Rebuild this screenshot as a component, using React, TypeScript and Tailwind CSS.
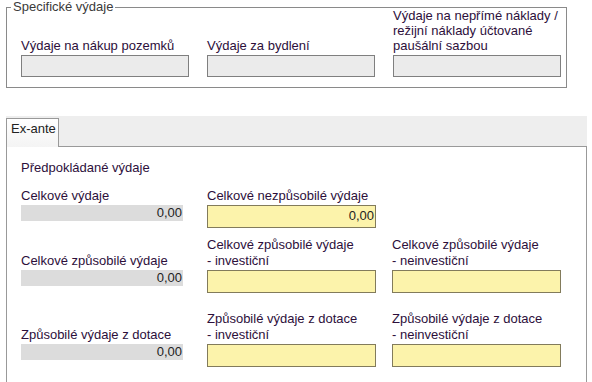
import React from "react";

const labelText = "text-[#2d0f3b]";

const GrayBox = () => (
  <div className="h-[22px] w-[168px] border border-[#7f7f7f] bg-[#ebebeb]" />
);

const YellowBox = ({ value }: { value?: string }) => (
  <div className="h-[23px] w-[169px] border border-[#827b5b] bg-[#fcf3ab] pr-[1px] text-right leading-[20px] text-[#222]">
    {value}
  </div>
);

const ReadOnly = ({ value }: { value: string }) => (
  <div className="h-[16px] w-[162px] bg-[#dcdcdc] pr-[1px] text-right leading-[16px] text-[#222]">
    {value}
  </div>
);

type Row = {
  left: string;
  mid: string[];
  right?: string[];
  midValue?: string;
  gap: string;
};

const rows: Row[] = [
  { left: "Celkové výdaje", mid: ["Celkové nezpůsobilé výdaje"], midValue: "0,00", gap: "mt-[12px]" },
  {
    left: "Celkové způsobilé výdaje",
    mid: ["Celkové způsobilé výdaje", "- investiční"],
    right: ["Celkové způsobilé výdaje", "- neinvestiční"],
    gap: "mt-[9px]",
  },
  {
    left: "Způsobilé výdaje z dotace",
    mid: ["Způsobilé výdaje z dotace", "- investiční"],
    right: ["Způsobilé výdaje z dotace", "- neinvestiční"],
    gap: "mt-[18px]",
  },
];

const App = () => {
  return (
    <div
      className="w-[592px] h-[382px] overflow-hidden bg-white text-[13px]"
      style={{ fontFamily: '"Liberation Sans", Arial, sans-serif' }}
    >
      {/* Specifické výdaje */}
      <div className="relative ml-[6px] mt-[7px] w-[561px] border border-[#8a8a8a] pl-[14px] pb-[10px]">
        <span className="absolute -top-[9px] left-[4px] bg-white px-[2px] leading-[16px] text-[#3a3a3a]">
          Specifické výdaje
        </span>
        <div className={`grid grid-cols-[186px_186px_168px] items-end leading-[15px] ${labelText}`}>
          <div>Výdaje na nákup pozemků</div>
          <div>Výdaje za bydlení</div>
          <div>
            Výdaje na nepřímé náklady /<br />
            režijní náklady účtované<br />
            paušální sazbou
          </div>
          <div className="mt-[2px]">
            <GrayBox />
          </div>
          <div className="mt-[2px]">
            <GrayBox />
          </div>
          <div className="mt-[2px]">
            <GrayBox />
          </div>
        </div>
      </div>

      {/* tabs */}
      <div className="ml-[6px] mt-[28px] w-[581px]">
        <div className="flex h-[30px] items-end bg-[#eeeeee]">
          <div className="relative z-10 -mb-px h-[29px] w-[53px] border border-b-0 border-[#999] bg-gradient-to-b from-white to-[#f4f4f4] pl-[4px] pt-[2px] leading-[16px] text-[#222]">
            Ex-ante
          </div>
        </div>
        <div className="h-[240px] border-x border-t border-[#999] pl-[14px] pt-[13px] leading-[16px]">
          <div className={labelText}>Předpokládané výdaje</div>
          {rows.map((r) => (
            <div
              key={r.left}
              className={`grid grid-cols-[186px_185px_169px] ${r.gap} ${labelText}`}
            >
              <div className="self-end">{r.left}</div>
              <div className="self-end">
                {r.mid.map((m) => (
                  <div key={m}>{m}</div>
                ))}
              </div>
              <div className="self-end">
                {r.right?.map((m) => (
                  <div key={m}>{m}</div>
                ))}
              </div>
              <div className="mt-px">
                <ReadOnly value="0,00" />
              </div>
              <div className="mt-px">
                <YellowBox value={r.midValue} />
              </div>
              <div className="mt-px">{r.right && <YellowBox />}</div>
            </div>
          ))}
        </div>
      </div>
    </div>
  );
};

export default App;
